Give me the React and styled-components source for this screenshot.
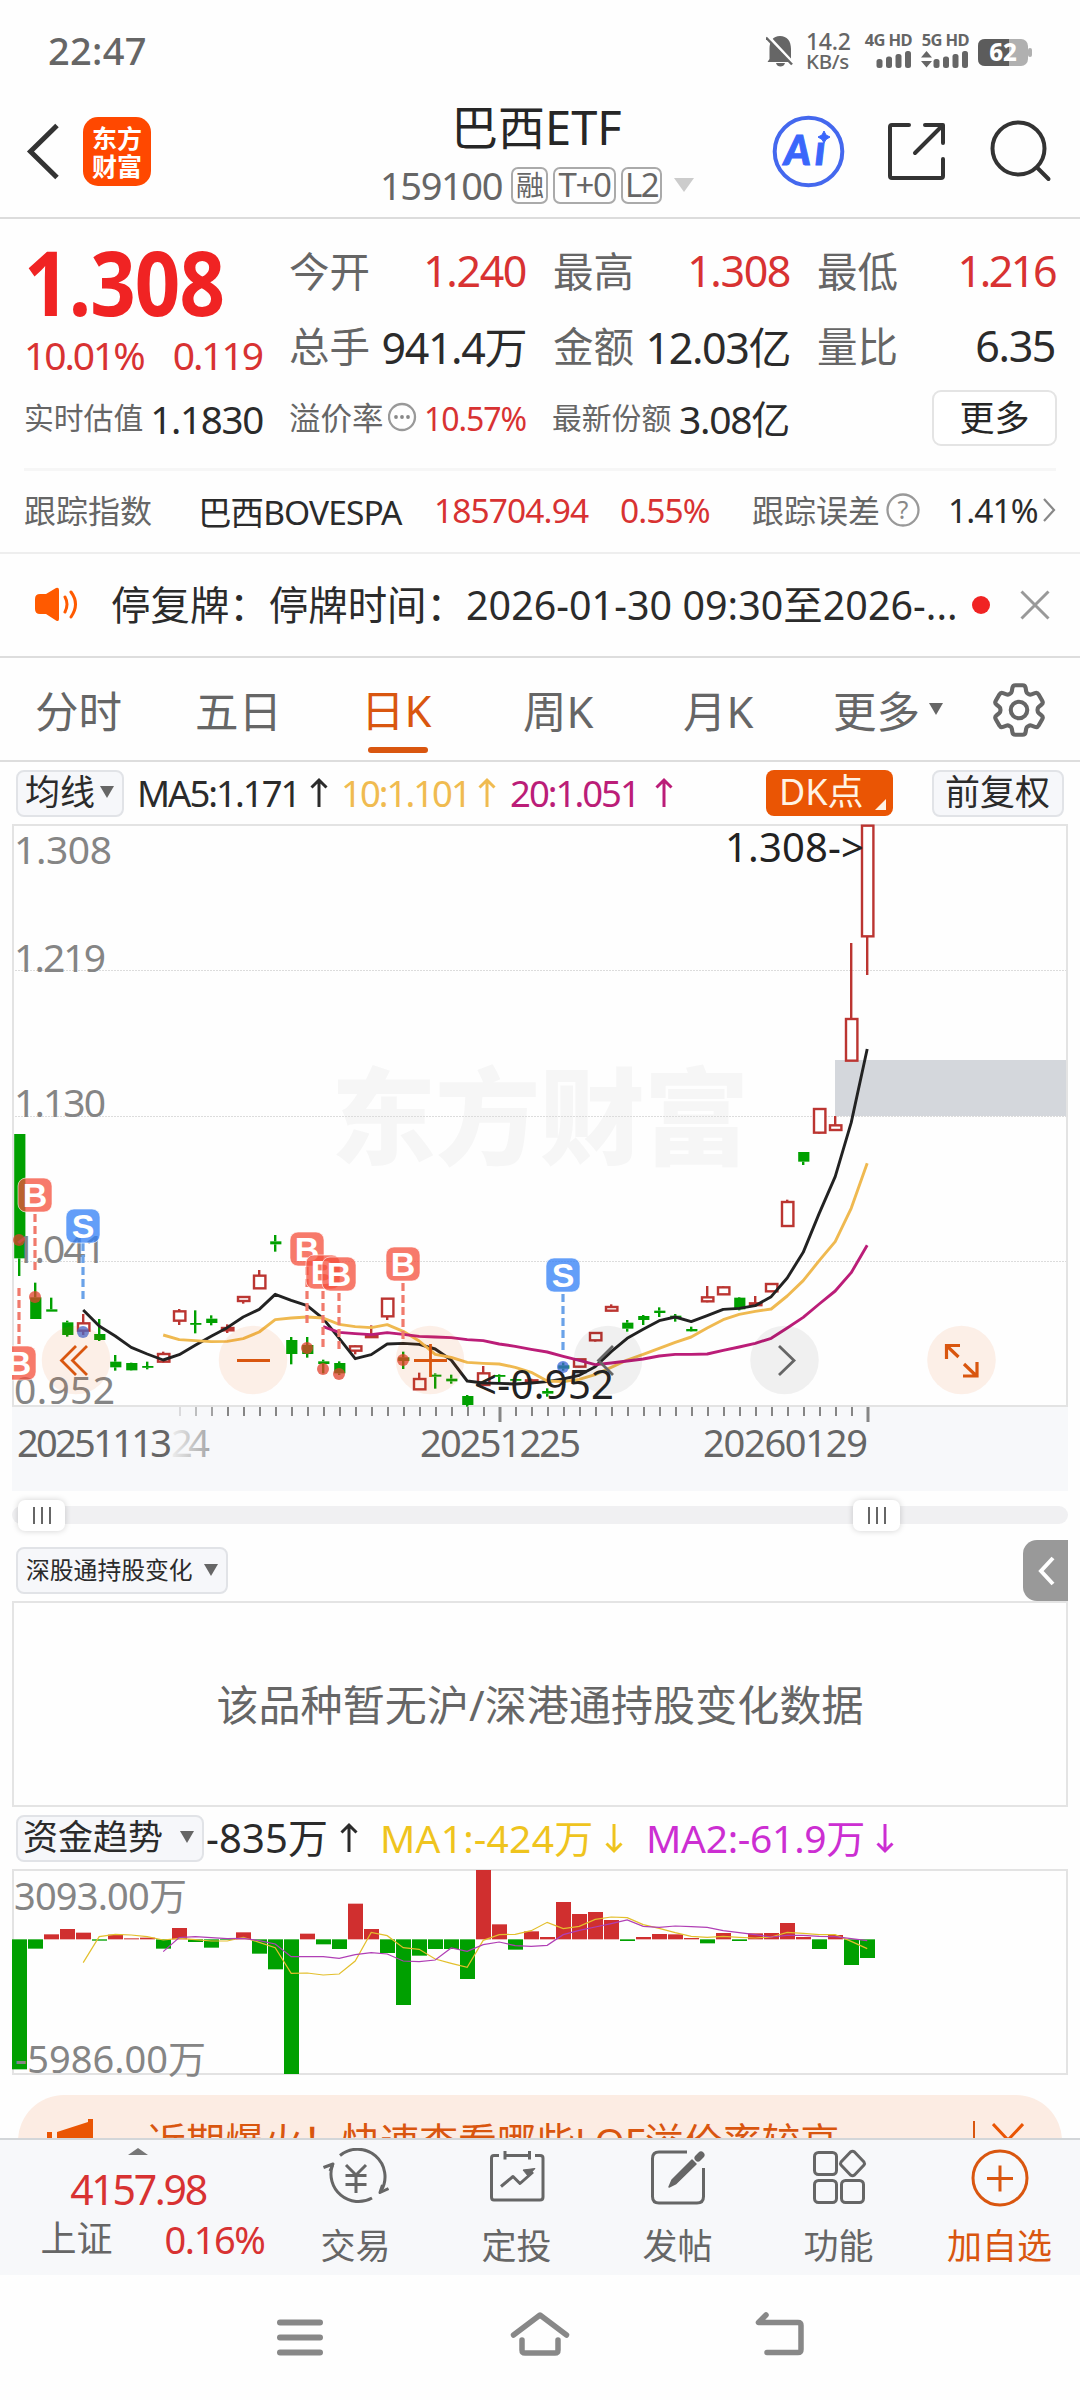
import styled, { createGlobalStyle, css } from 'styled-components';
import { HiOutlineCog6Tooth } from 'react-icons/hi2';

const GlobalStyle = createGlobalStyle`
  * {
    box-sizing: border-box;
  }

  body {
    margin: 0;
    background: #fff;
    font-family: "Noto Sans", "Noto Sans CJK SC", sans-serif;
    color: #2b2b2b;
  }

  svg {
    display: block;
    flex: none;
  }
`;

const Screen = styled.div`
  width: 1080px;
  height: 2400px;
  overflow: hidden;
  display: flex;
  flex-direction: column;
  background: #fefefe;
  white-space: nowrap;
`;

/* status bar */

const StatusBar = styled.div`
  height: 100px;
  display: flex;
  justify-content: space-between;
  padding: 0 48px 0 48px;
  color: #666;
`;

const Clock = styled.div`
  font-size: 38px;
  line-height: 100px;
  letter-spacing: 0.3px;
  font-weight: 500;
`;

const StatusIcons = styled.div`
  display: flex;
  padding-top: 31px;
`;

const Speed = styled.div`
  width: 45px;
  margin: 0 12px 0 12px;
  font-size: 23px;
  font-weight: 500;
  line-height: 20px;
  letter-spacing: -0.3px;

  span {
    display: block;
    font-size: 20.5px;
  }
`;

const Signal = styled.div`
  width: 49px;
  margin-right: 8px;
  display: flex;
  flex-direction: column;
  align-items: flex-end;
  gap: 2px;
  font-size: 16.5px;
  font-weight: 700;
  line-height: 18px;
  letter-spacing: -0.6px;
`;

/* title bar */

const TitleBar = styled.header`
  height: 119px;
  border-bottom: 2px solid #dcdcdc;
  display: flex;
  align-items: flex-start;
`;

const BackIcon = styled.svg`
  margin: 22px 22px 0 26px;
`;

const BrandLogo = styled.div`
  width: 68px;
  height: 69px;
  margin-top: 17px;
  border-radius: 15px;
  background: #ff4800;
  color: #fff;
  display: flex;
  flex-direction: column;
  align-items: center;
  justify-content: center;
  font-size: 25px;
  line-height: 28px;
  font-weight: 700;
`;

const TitleBlock = styled.div`
  width: 314px;
  margin-left: 229px;
`;

const FundName = styled.h1`
  margin: -3px 0 0;
  padding-left: 71px;
  font-size: 47px;
  font-weight: 400;
  line-height: 61px;
  letter-spacing: 0;
  color: #262626;
`;

const CodeLine = styled.div`
  height: 54px;
  display: flex;
  align-items: center;
  font-size: 38px;
  letter-spacing: -1.4px;
  color: #666;
`;

const CodeTag = styled.span`
  width: ${(props) => props.$width}px;
  height: 37px;
  margin-left: ${(props) => props.$gap || 5}px;
  border: 2px solid #aaa;
  border-radius: 7px;
  font-size: ${(props) => props.$size || 33}px;
  line-height: 32px;
  text-align: center;
`;

const HeaderActions = styled.div`
  margin: 13px 0 0 78px;
`;

const TriangleDown = styled.i`
  width: 0;
  height: 0;
  flex: none;
  border-style: solid;
  border-width: ${(props) => props.$height || 12}px ${(props) => (props.$width || 15) / 2}px 0;
  border-color: ${(props) => props.$color || '#666'} transparent transparent;
  margin-left: ${(props) => props.$gap || 0}px;
`;

/* quote */

const Quote = styled.section`
  display: flex;
  height: 164px;
  padding: 14px 25px 0 24px;
`;

const PriceBlock = styled.div`
  width: 266px;
`;

const Price = styled.div`
  font-size: 90px;
  line-height: 97px;
  font-weight: 700;
  letter-spacing: -1px;
  transform: scaleX(0.885);
  transform-origin: 0 0;
  color: #f02323;
`;

const Change = styled.div`
  width: 238px;
  display: flex;
  justify-content: space-between;
  font-size: 39px;
  line-height: 50px;
  letter-spacing: -2.1px;
  color: #d83232;
`;

const StatGrid = styled.div`
  display: grid;
  grid-template-columns: 237px 237px 238px;
  grid-auto-rows: 75px;
  column-gap: 27px;
`;

const Stat = styled.div`
  display: flex;
  justify-content: space-between;
  align-items: center;
`;

const StatLabel = styled.span`
  margin-top: -3px;
  font-size: ${(props) => props.$size || 40.5}px;
  color: #666;
`;

const StatValue = styled.span`
  font-size: ${(props) => props.$size || 43}px;
  letter-spacing: ${(props) => props.$track || '-0.033em'};
  margin-top: -1px;
  color: ${(props) => (props.$up ? '#d83232' : '#2b2b2b')};
`;

const EstimateRow = styled.section`
  height: 73px;
  display: grid;
  grid-template-columns: 239px 237px 237px 126px;
  column-gap: 26px;
  padding-left: 24px;
  align-items: center;
  line-height: 50px;
`;

const MoreButton = styled.button`
  width: 125px;
  height: 56px;
  margin: -4px 0 0 117px;
  border: 2px solid #e4e4e4;
  border-radius: 9px;
  background: #fff;
  font: inherit;
  font-size: 35px;
  line-height: 46px;
  color: #262626;
  padding: 0;
`;

const IndexRow = styled.section`
  height: 84px;
  margin: 12px 24px 0;
  padding-bottom: 3px;
  border-top: 3px solid #f6f6f6;
  display: grid;
  grid-template-columns: 174px 236px 186px 132px 133px 63px 94px 20px;
  align-items: center;
  font-size: 32px;
`;

const IndexNumber = styled.span`
  font-size: 33.5px;
  letter-spacing: -0.9px;
  color: ${(props) => (props.$up ? '#d83232' : '#2b2b2b')};
`;

/* notice strip */

const Notice = styled.section`
  height: 106px;
  border-top: 2px solid #eee;
  border-bottom: 2px solid #ddd;
  display: flex;
  align-items: center;
  padding-left: 33px;
`;

const NoticeText = styled.div`
  width: 854px;
  margin-left: 31px;
  padding-bottom: 5px;
  font-size: 39.4px;
  letter-spacing: 0.05px;
`;

const Dot = styled.i`
  width: 18px;
  height: 18px;
  margin: 0 30px 0 7px;
  border-radius: 50%;
  background: #f02323;
`;

/* period tabs */

const Tabs = styled.nav`
  height: 104px;
  border-bottom: 2px solid #ddd;
  display: grid;
  grid-template-columns: 160px 172px 156px 160px 150px 153px 64px;
  padding-left: 35px;
  align-items: center;
`;

const Tab = styled.div`
  height: 104px;
  display: flex;
  align-items: center;
  padding-bottom: 2px;
  font-size: 43.5px;
  color: #666;

  ${(props) =>
    props.$active &&
    css`
      color: #d9560f;
      flex-direction: column;
      align-items: flex-start;
      padding-top: 21px;
      line-height: 62px;
      text-indent: -6px;

      &::after {
        content: '';
        width: 60px;
        height: 6px;
        margin-top: 6px;
        margin-left: 1px;
        border-radius: 3px;
        background: #d9560f;
      }
    `}
`;

/* indicator rows */

const IndicatorRow = styled.div`
  height: ${(props) => props.$height}px;
  display: flex;
  align-items: center;
  padding-left: 16px;
`;

const Chip = styled.div`
  width: ${(props) => props.$width}px;
  height: 47px;
  flex: none;
  display: flex;
  align-items: center;
  padding-left: ${(props) => props.$pad || 7}px;
  padding-bottom: 2px;
  margin-left: ${(props) => props.$gap || 0}px;
  border: 2px solid #e1e3e7;
  border-radius: 8px;
  background: #f6f7fa;
  font-size: ${(props) => props.$size || 35}px;
  line-height: 40px;
`;

const DkChip = styled(Chip)`
  position: relative;
  border: 0;
  height: 46px;
  background: #ea5504;
  color: #fff3e4;

  &::after {
    content: '';
    position: absolute;
    right: 7px;
    bottom: 6px;
    border-style: solid;
    border-width: 0 0 11px 11px;
    border-color: transparent transparent #fff3e4;
  }
`;

const Reading = styled.div`
  width: ${(props) => props.$width}px;
  flex: none;
  margin-left: ${(props) => props.$gap || 0}px;
  display: flex;
  align-items: center;
  justify-content: space-between;
  line-height: 44px;
  padding-bottom: 1px;
  font-size: ${(props) => props.$size || 36.5}px;
  letter-spacing: ${(props) => props.$track || -2}px;
  color: ${(props) => props.$color || '#2b2b2b'};
`;

/* charts */

const ChartSvg = styled.svg`
  font-size: 39px;
`;

const SliderWrap = styled.div`
  height: 49px;
  padding: 15px 12px 0;
`;

const SliderTrack = styled.div`
  height: 18px;
  border-radius: 9px;
  background: #f0f0f2;
  display: flex;
  align-items: center;
  justify-content: space-between;
  padding: 0 168px 0 6px;
`;

const Handle = styled.div`
  width: 47px;
  height: 31px;
  flex: none;
  border-radius: 7px;
  background: #fff;
  box-shadow: 0 0 6px rgba(0, 0, 0, 0.18);
  display: flex;
  align-items: center;
  justify-content: center;
  gap: 6px;

  i {
    width: 2px;
    height: 17px;
    background: #666;
  }
`;

const CollapseTab = styled.div`
  width: 45px;
  height: 61px;
  margin: 0 12px 0 auto;
  border-radius: 14px 0 0 14px;
  background: #999;
  display: flex;
  align-items: center;
  justify-content: center;
`;

const EmptyPanel = styled.section`
  height: 206px;
  margin: 0 12px;
  padding-bottom: 4px;
  border: 2px solid #e4e4e4;
  display: flex;
  align-items: center;
  justify-content: center;
  font-size: 42px;
  letter-spacing: 0.1px;
  color: #666;
`;

/* promo banner, its lower half slides under the tool bar */

const PromoClip = styled.div`
  height: 61px;
  flex: none;
  overflow: hidden;
  padding: 18px 18px 0;
`;

const Promo = styled.div`
  height: 92px;
  padding-left: 28px;
  border-radius: 46px;
  background: #fcece3;
  color: #d9560f;
  display: flex;
  align-items: center;
  font-size: 38.9px;
`;

const PromoText = styled.div`
  width: 815px;
  margin-left: 51px;
  padding-bottom: 4px;
`;

const PromoDivider = styled.i`
  width: 2px;
  height: 40px;
  margin: 0 17px 0 11px;
  background: #d9560f;
`;

const ToolBar = styled.footer`
  height: 137px;
  flex: none;
  border-top: 2px solid #d3d6d9;
  background: #f7f8fa;
  display: flex;
`;

const Market = styled.div`
  width: 275px;
  flex: none;
  display: flex;
  flex-direction: column;
  align-items: center;
  padding-top: 8px;
  color: #d83232;
`;

const TriangleUp = styled.i`
  border-style: solid;
  border-width: 0 10px 7px;
  border-color: transparent transparent #777;
`;

const MarketPrice = styled.div`
  margin-left: 1px;
  padding-top: 2px;
  font-size: 41px;
  line-height: 64px;
  letter-spacing: -2.3px;
`;

const MarketChange = styled.div`
  width: 224px;
  margin-left: 30px;
  display: flex;
  justify-content: space-between;
  font-size: 38px;
  line-height: 36px;
  letter-spacing: -1.4px;

  span {
    font-size: 36px;
    letter-spacing: 0;
    line-height: 36px;
    color: #666;
  }
`;

const Tool = styled.div`
  width: 161px;
  flex: none;
  display: flex;
  flex-direction: column;
  align-items: center;
  padding-top: 8px;
  font-size: 35px;
  line-height: 50px;
  color: ${(props) => (props.$accent ? '#d9560f' : '#666')};

  svg {
    margin-bottom: 11px;
  }
`;

const SystemNav = styled.div`
  height: 125px;
  display: flex;
  justify-content: center;
  gap: 180px;
  padding-top: 34px;
`;

// Chart rows are kept in thirds of a pixel measured from y = 1080.
const py = (v) => 1080 + v / 3;
const px = (i) => 19.2 + i * 16;

// [rising, body top, body bottom, high, low]
const candles = [
  [0, 162, 535, 162, 588], [0, 652, 717, 608, 717], [0, 688, 695, 653, 695],
  [0, 727, 765, 722, 770], [1, 730, 752, 702, 765], [0, 762, 780, 717, 783],
  [0, 845, 862, 825, 872], [0, 849, 871, 848, 872], [0, 858, 863, 845, 868],
  [1, 822, 845, 815, 848], [1, 694, 722, 687, 735], [0, 729, 733, 691, 760],
  [0, 716, 729, 706, 736], [1, 744, 751, 733, 759], [1, 651, 663, 648, 671],
  [1, 587, 625, 570, 627], [0, 484, 493, 465, 515], [0, 780, 822, 771, 853],
  [0, 795, 822, 771, 833], [0, 844, 852, 839, 880], [0, 849, 880, 844, 885],
  [1, 799, 812, 796, 823], [1, 766, 771, 736, 773], [1, 656, 709, 656, 720],
  [0, 832, 843, 815, 867], [1, 897, 928, 878, 930], [0, 884, 890, 880, 926],
  [0, 896, 904, 884, 911], [0, 948, 975, 945, 980], [1, 880, 915, 858, 918],
  [0, 885, 890, 883, 910], [0, 897, 902, 888, 906], [1, 901, 906, 896, 912],
  [0, 933, 941, 925, 950], [0, 856, 866, 848, 872], [1, 838, 860, 838, 862],
  [1, 759, 781, 757, 785], [1, 681, 692, 673, 694], [0, 728, 746, 720, 755],
  [0, 708, 720, 705, 735], [0, 692, 699, 682, 711], [0, 707, 714, 702, 725],
  [0, 747, 754, 740, 755], [1, 652, 664, 618, 667], [1, 622, 643, 619, 645],
  [0, 653, 688, 651, 691], [1, 670, 675, 648, 677], [1, 612, 634, 611, 636],
  [1, 366, 438, 359, 441], [0, 216, 245, 216, 255], [1, 87, 158, 87, 161],
  [1, 136, 150, 108, 150], [1, -183, -58, -411, -58], [1, -763, -431, -763, -315],
];

const ma5 = [690, 738, 768, 802, 822, 840, 824, 796, 769, 743, 711, 688, 643, 661, 677, 716, 775, 836, 824, 792, 790, 793, 807, 840, 903, 909, 910, 912, 909, 905, 897, 886, 860, 815, 775, 748, 722, 711, 725, 707, 688, 685, 677, 650, 594, 517, 400, 290, 128, -93];
const ma10 = [765, 779, 782, 785, 784, 776, 756, 719, 714, 711, 714, 733, 740, 743, 734, 754, 783, 823, 832, 847, 850, 852, 862, 877, 903, 905, 898, 884, 862, 840, 823, 805, 787, 771, 744, 719, 703, 694, 687, 648, 602, 542, 485, 385, 250];
const ma20 = [740, 757, 761, 764, 758, 763, 769, 771, 773, 779, 782, 792, 799, 808, 816, 829, 841, 854, 849, 843, 837, 828, 823, 823, 822, 811, 801, 790, 775, 744, 712, 672, 633, 578, 496];

// letter, centre x, centre y, dash start, dash end, dot y
const signals = [
  ['B', 19, 1363, 1288, 1346, 1240],
  ['B', 35, 1195, 1214, 1271, 1297],
  ['S', 83, 1226, 1243, 1302, 1332],
  ['B', 307, 1249, 1267, 1325, 1348],
  ['B', 323, 1272, 1291, 1348, 1369],
  ['B', 339, 1274, 1293, 1350, 1374],
  ['B', 403, 1264, 1283, 1340, 1360],
  ['S', 563, 1275, 1294, 1351, 1367],
];

const flows = [808, 446, 403, 387, 398, 422, 404, 415, 413, 446, 384, 426, 443, 420, 397, 461, 508, 822, 401, 433, 447, 311, 387, 459, 615, 467, 447, 447, 537, 210, 373, 449, 394, 411, 306, 342, 336, 360, 423, 411, 402, 403, 414, 430, 399, 423, 400, 399, 369, 411, 447, 405, 495, 474];
const flowMa1 = [488, 410, 403, 405, 410, 420, 415, 419, 423, 423, 412, 427, 443, 520, 519, 525, 522, 483, 397, 407, 443, 448, 477, 490, 502, 421, 404, 403, 392, 367, 386, 379, 358, 351, 353, 374, 385, 398, 409, 412, 409, 412, 414, 411, 397, 400, 404, 404, 424, 446];
const flowMa2 = [455, 413, 410, 413, 416, 415, 422, 432, 470, 470, 470, 475, 464, 458, 462, 483, 485, 480, 444, 454, 434, 426, 437, 439, 436, 404, 391, 381, 371, 360, 379, 382, 378, 380, 382, 392, 398, 404, 411, 406, 406, 409, 410, 416, 422];

const toPoints = (values, start, y) => values.map((v, i) => `${px(i + start)},${y(v)}`).join(' ');

const Candle = ({ index, data }) => {
  const [up, top, bottom, high, low] = data;
  const x = px(index);
  const color = up ? '#bb3531' : '#00a000';
  const height = Math.max((bottom - top) / 3, 1.8);
  return (
    <g stroke={color} strokeWidth="2.4">
      {high < top && <line x1={x} x2={x} y1={py(high)} y2={py(top)} />}
      {low > bottom && <line x1={x} x2={x} y1={py(bottom)} y2={py(low)} />}
      {up ? (
        <rect x={x - 5.2} y={py(top)} width="11.4" height={height} fill="#fff" />
      ) : (
        <rect x={x - 5} y={py(top)} width="11.2" height={height} fill={color} stroke="none" />
      )}
    </g>
  );
};

const SignalMark = ({ data }) => {
  const [letter, x, y, from, to, dot] = data;
  const buy = letter === 'B';
  return (
    <g>
      <circle cx={x} cy={dot} r="6" fill={buy ? '#e0402c' : '#3b66d8'} opacity="0.75" />
      <line x1={x} x2={x} y1={from} y2={to} stroke={buy ? '#f07a6c' : '#6aa2e8'} strokeWidth="3.2" strokeDasharray="8 4" />
      <rect
        x={x - 17}
        y={y - 17}
        width="34"
        height="34"
        rx="8"
        fill={buy ? '#f4503d' : '#327ff6'}
        fillOpacity="0.76"
        stroke="#fff"
        strokeOpacity="0.6"
      />
      <text x={x} y={y + 12} textAnchor="middle" fontFamily="Liberation Sans" fontWeight="700" fontSize="34" fill="#fff">
        {letter}
      </text>
    </g>
  );
};

const KLineChart = () => (
  <ChartSvg width="1080" height="667" viewBox="0 824 1080 667">
    <defs>
      <clipPath id="plot">
        <rect x="12" y="824" width="1056" height="583" />
      </clipPath>
      <linearGradient id="dateFade" x1="0" x2="1">
        <stop offset="0" stopColor="#eee" />
        <stop offset="1" stopColor="#a6a6a6" />
      </linearGradient>
    </defs>
    <rect x="12" y="1406" width="1056" height="85" fill="#f7f8fa" />
    <text x="331" y="1156" fontSize="105" fontWeight="900" fill="#f6f6f6" textLength="418">东方财富</text>
    <g stroke="#dcdcdc" strokeDasharray="2 1">
      <line x1="12" x2="1068" y1="970.5" y2="970.5" />
      <line x1="12" x2="1068" y1="1116.5" y2="1116.5" />
      <line x1="12" x2="1068" y1="1261.5" y2="1261.5" />
    </g>
    <rect x="835" y="1060" width="232" height="56" fill="#d4d7dc" />
    <path d="M13 1406V825H1067V1406Z" fill="none" stroke="#e3e3e3" strokeWidth="2" />

    {candles.map((data, i) => <Candle key={i} index={i} data={data} />)}
    <g fill="none" strokeWidth="2.9" strokeLinejoin="round">
      <polyline points={toPoints(ma5, 4, py)} stroke="#222" />
      <polyline points={toPoints(ma10, 9, py)} stroke="#efb950" />
      <polyline points={toPoints(ma20, 19, py)} stroke="#bb1d78" />
    </g>

    <g fill="#858585">
      <text x="14" y="864" textLength="98">1.308</text>
      <text x="14" y="972" textLength="92">1.219</text>
      <text x="14" y="1117" textLength="92">1.130</text>
      <text x="14" y="1263" textLength="92">1.041</text>
      <text x="14" y="1404" textLength="101">0.952</text>
    </g>
    <g clipPath="url(#plot)">
      {signals.map((data, i) => <SignalMark key={i} data={data} />)}
    </g>

    <g fill="#ea5504" fillOpacity="0.09">
      <circle cx="76" cy="1360" r="34.3" />
      <circle cx="253" cy="1360" r="34.3" />
      <circle cx="430" cy="1360" r="34.3" />
      <circle cx="961.5" cy="1360" r="34.3" />
    </g>
    <g fill="#000" fillOpacity="0.055">
      <circle cx="608" cy="1360" r="34.3" />
      <circle cx="784.5" cy="1360" r="34.3" />
    </g>
    <g fill="none" stroke="#d9560f" strokeWidth="2.8">
      <path d="M76 1346L61.500 1360.500L76 1375M87 1346L72.500 1360.500L87 1375" />
      <path d="M237 1360.500H270M414 1360.500H447M430.500 1344V1377" />
      <path d="M960 1345.500H946.500V1359M946.500 1345.500L958.500 1357M964 1364L976.500 1376M963 1376H977V1362" strokeWidth="3.2" />
    </g>
    <path d="M613 1346L598.500 1360.500L613 1375M779 1346L794 1360.500L779 1375" fill="none" stroke="#666" strokeWidth="2.8" />

    <g fill="#222" fontSize="40">
      <text x="725" y="862" textLength="139">1.308-&gt;</text>
      <text x="474" y="1399" textLength="140">&lt;-0.952</text>
    </g>

    <g stroke="#858585" strokeWidth="2">
      {candles.slice(10).map((_, i) => (
        <line key={i} x1={px(i + 10) + 0.8} x2={px(i + 10) + 0.8} y1="1407" y2="1416" opacity={Math.min(1, 0.25 + i * 0.25)} />
      ))}
      <path d="M500 1407V1422M868 1407V1422" strokeWidth="3" />
    </g>
    <g fill="#666" fontSize="38">
      <text x="17" y="1457" textLength="155">20251113</text>
      <text x="171" y="1457" textLength="39" fill="url(#dateFade)">24</text>
      <text x="420" y="1457" textLength="161">20251225</text>
      <text x="703" y="1457" textLength="165">20260129</text>
    </g>
  </ChartSvg>
);

const FlowChart = () => {
  const y = (v) => 1800 + v / 3;
  return (
    <ChartSvg width="1080" height="208" viewBox="0 1869 1080 208">
      <path d="M13 2074V1870H1067V2074Z" fill="none" stroke="#e3e3e3" strokeWidth="2" />
      {flows.map((v, i) => (
        <rect
          key={i}
          x={12 + i * 16}
          y={Math.min(y(v), y(418))}
          width="15"
          height={Math.abs(v - 418) / 3}
          fill={v < 418 ? '#d02f2f' : '#00a000'}
        />
      ))}
      <polyline points={toPoints(flowMa1, 4, y)} fill="none" stroke="#e3bf2c" strokeWidth="1.2" />
      <polyline points={toPoints(flowMa2, 9, y)} fill="none" stroke="#b03fb5" strokeWidth="1.2" />
      <g fill="#858585" fontSize="38">
        <text x="14" y="1910" textLength="173">3093.00万</text>
        <text x="15" y="2073" textLength="191">-5986.00万</text>
      </g>
    </ChartSvg>
  );
};

const Arrow = ({ down }) => (
  <svg width="18" height="32" viewBox="0 0 18 32" fill="none" stroke="currentColor" strokeWidth="3">
    {down ? <path d="M9 2V29M1.500 21.500L9 29L16.500 21.500" /> : <path d="M9 30V3M1.500 10.500L9 3L16.500 10.500" />}
  </svg>
);

const Bars = ({ updown }) => (
  <svg width={updown ? 48 : 36} height="17" viewBox={updown ? '-12 0 48 17' : '0 0 36 17'} fill="#666">
    {updown && <path d="M-12 6.500L-6.500 0L-1 6.500ZM-12 10L-6.500 16.500L-1 10Z" />}
    <rect x="0.500" y="8" width="6" height="9" rx="2.500" />
    <rect x="10" y="5.500" width="6" height="11.500" rx="2.500" />
    <rect x="19.500" y="3" width="6" height="14" rx="2.500" />
    <rect x="29" y="0" width="6" height="17" rx="2.500" />
  </svg>
);

// Tool bar icons share a 66 x 62 box and 3px strokes.
const ToolIcon = ({ children }) => (
  <svg width="66" height="62" viewBox="0 0 66 62" fill="none" stroke="currentColor" strokeWidth="3" strokeLinejoin="round">
    {children}
  </svg>
);

const App = () => {
  return (
    <>
      <GlobalStyle />
      <Screen>
        <StatusBar>
          <Clock>22:47</Clock>
          <StatusIcons>
            <svg width="28" height="40" viewBox="0 0 28 40">
              <path d="M3.500 28V18C3.500 10 7 5 14 5S25 10 25 18V28L26 31H1.500ZM10 32H19C18.500 34.500 16.500 35.500 14.500 35.500S10.500 34.500 10 32Z" fill="#666" />
              <path d="M1.500 4.500L28 33" stroke="#fff" strokeWidth="3" />
              <path d="M0 6.500L26 33.500" stroke="#666" strokeWidth="2.500" />
            </svg>
            <Speed>14.2<span>KB/s</span></Speed>
            <Signal>4G HD<Bars /></Signal>
            <Signal>5G HD<Bars updown /></Signal>
            <svg width="55" height="40" viewBox="0 0 55 40">
              <rect x="1" y="8" width="50" height="27" rx="7" fill="#b0b0b0" />
              <rect x="51" y="17" width="4" height="9" rx="2" fill="#b0b0b0" />
              <path d="M8 8H32V35H8Q1 35 1 28V15Q1 8 8 8Z" fill="#5c5c5c" />
              <text x="26" y="30" textAnchor="middle" fontSize="24" fontWeight="800" fill="#fff">62</text>
            </svg>
          </StatusIcons>
        </StatusBar>

        <TitleBar>
          <BackIcon width="35" height="60" viewBox="0 0 35 60" fill="none" stroke="#333" strokeWidth="5">
            <path d="M31 3.500L4.500 29.500L31 55.500" />
          </BackIcon>
          <BrandLogo><span>东方</span><span>财富</span></BrandLogo>
          <TitleBlock>
            <FundName>巴西ETF</FundName>
            <CodeLine>
              159100
              <CodeTag $width={37} $gap={9} $size={28}>融</CodeTag>
              <CodeTag $width={64}>T+0</CodeTag>
              <CodeTag $width={41}>L2</CodeTag>
              <TriangleDown $width={21} $height={14} $color="#ccc" $gap={12} />
            </CodeLine>
          </TitleBlock>
          <HeaderActions>
            <svg width="280" height="76" viewBox="772 113 280 76" fill="none">
              <circle cx="808.500" cy="151.500" r="33.800" stroke="#4468ee" strokeWidth="4" />
              <g fill="#3a66fb" stroke="#3a66fb" fontFamily="Lato" fontWeight="900" fontStyle="italic" fontSize="41">
                <text x="784" y="164.500">A</text>
                <text x="815" y="164.500">ı</text>
                <path d="M824 131L826 135L830 137L826 139.500L824 143L822 139.500L818 137L822 135Z" />
              </g>
              <g stroke="#333" strokeWidth="4" strokeLinecap="round" strokeLinejoin="round">
                <path d="M909 125H892Q890 125 890 127V176Q890 178 892 178H941Q943 178 943 176V159" />
                <path d="M925 125H943V143M942 126L915 153" />
                <circle cx="1018.500" cy="148.500" r="26" />
                <path d="M1037 167.500L1048.500 179" />
              </g>
            </svg>
          </HeaderActions>
        </TitleBar>

        <Quote>
          <PriceBlock>
            <Price>1.308</Price>
            <Change><span>10.01%</span><span>0.119</span></Change>
          </PriceBlock>
          <StatGrid>
            <Stat><StatLabel>今开</StatLabel><StatValue $up>1.240</StatValue></Stat>
            <Stat><StatLabel>最高</StatLabel><StatValue $up>1.308</StatValue></Stat>
            <Stat><StatLabel>最低</StatLabel><StatValue $up $track="-2.5px">1.216</StatValue></Stat>
            <Stat><StatLabel>总手</StatLabel><StatValue>941.4万</StatValue></Stat>
            <Stat><StatLabel>金额</StatLabel><StatValue>12.03亿</StatValue></Stat>
            <Stat><StatLabel>量比</StatLabel><StatValue>6.35</StatValue></Stat>
          </StatGrid>
        </Quote>
        <EstimateRow>
          <Stat><StatLabel $size={29.8}>实时估值</StatLabel><StatValue $size={38.5}>1.1830</StatValue></Stat>
          <Stat>
            <StatLabel $size={31.5}>溢价率</StatLabel>
            <svg width="32" height="38" viewBox="0 0 32 38">
              <circle cx="14" cy="16" r="13" fill="none" stroke="#999" strokeWidth="2.300" />
              <g fill="#888">
                <circle cx="8" cy="16" r="1.900" />
                <circle cx="14" cy="16" r="1.900" />
                <circle cx="20" cy="16" r="1.900" />
              </g>
            </svg>
            <StatValue $size={32} $up>10.57%</StatValue>
          </Stat>
          <Stat><StatLabel $size={29.8}>最新份额</StatLabel><StatValue $size={39}>3.08亿</StatValue></Stat>
          <MoreButton>更多</MoreButton>
        </EstimateRow>

        <IndexRow>
          <StatLabel $size={32}>跟踪指数</StatLabel>
          <IndexNumber>巴西BOVESPA</IndexNumber>
          <IndexNumber $up>185704.94</IndexNumber>
          <IndexNumber $up>0.55%</IndexNumber>
          <StatLabel $size={32}>跟踪误差</StatLabel>
          <svg width="36" height="36" viewBox="0 0 36 36">
            <circle cx="18" cy="18" r="15.500" fill="none" stroke="#999" strokeWidth="2.300" />
            <text x="18" y="26.500" textAnchor="middle" fontSize="25" fill="#888">?</text>
          </svg>
          <IndexNumber>1.41%</IndexNumber>
          <svg width="14" height="26" viewBox="0 0 14 26" fill="none" stroke="#888" strokeWidth="2.200">
            <path d="M2 2L12 13L2 24" />
          </svg>
        </IndexRow>

        <Notice>
          <svg width="47" height="40" viewBox="33 585 47 40" fill="none" stroke="#ff5a00" strokeWidth="3" strokeLinecap="round">
            <path d="M40 594H46L56 588Q59 587 59 590V619Q59 622 56 620.500L46 614H40Q35 614 35 609V599Q35 594 40 594Z" fill="#ff5a00" stroke="none" />
            <path d="M65 597Q69 604 65 612M71 592Q80 604 71 617" />
          </svg>
          <NoticeText>停复牌：停牌时间：2026-01-30 09:30至2026-...</NoticeText>
          <Dot />
          <svg width="30" height="30" viewBox="0 0 30 30" stroke="#999" strokeWidth="3">
            <path d="M1.500 1.500L28.500 28.500M28.500 1.500L1.500 28.500" />
          </svg>
        </Notice>

        <Tabs>
          <Tab>分时</Tab>
          <Tab>五日</Tab>
          <Tab $active>日K</Tab>
          <Tab>周K</Tab>
          <Tab>月K</Tab>
          <Tab>更多<TriangleDown $gap={9} /></Tab>
          <HiOutlineCog6Tooth size={66} color="#666" />
        </Tabs>

        <IndicatorRow $height={62}>
          <Chip $width={108}>均线<TriangleDown $gap={5} /></Chip>
          <Reading $width={191} $gap={13}>MA5:1.171<Arrow /></Reading>
          <Reading $width={155} $gap={13} $color="#f0bb50">10:1.101<Arrow /></Reading>
          <Reading $width={163} $gap={14} $color="#bb1d78">20:1.051<Arrow /></Reading>
          <DkChip $width={127} $pad={13} $gap={93} $size={36}>DK点</DkChip>
          <Chip $width={132} $pad={11} $gap={39}>前复权</Chip>
        </IndicatorRow>

        <KLineChart />

        <SliderWrap>
          <SliderTrack>
            <Handle><i /><i /><i /></Handle>
            <Handle><i /><i /><i /></Handle>
          </SliderTrack>
        </SliderWrap>

        <IndicatorRow $height={61}>
          <Chip $width={212} $pad={8} $size={23.8}>深股通持股变化<TriangleDown $gap={11} /></Chip>
          <CollapseTab>
            <svg width="18" height="30" viewBox="0 0 18 30" fill="none" stroke="#fff" strokeWidth="4">
              <path d="M16 2L4 15L16 28" />
            </svg>
          </CollapseTab>
        </IndicatorRow>
        <EmptyPanel>该品种暂无沪/深港通持股变化数据</EmptyPanel>

        <IndicatorRow $height={62}>
          <Chip $width={188} $pad={5}>资金趋势<TriangleDown $gap={17} /></Chip>
          <Reading $width={152} $gap={2} $size={40} $track={0.1}>-835万<Arrow /></Reading>
          <Reading $width={243} $gap={22} $size={39} $track={0.2} $color="#efc41e">MA1:-424万<Arrow down /></Reading>
          <Reading $width={248} $gap={23} $size={39} $track={-0.3} $color="#cc2ed2">MA2:-61.9万<Arrow down /></Reading>
        </IndicatorRow>
        <FlowChart />

        <PromoClip>
          <Promo>
            <svg width="50" height="46" viewBox="0 0 50 46" fill="#ea5504">
              <path d="M1 14H6V34H1ZM11 14L42 4V1H47V46H42V42L11 32Z" />
            </svg>
            <PromoText>近期爆火！快速查看哪些LOF溢价率较高</PromoText>
            <PromoDivider />
            <svg width="32" height="36" viewBox="0 0 32 36" stroke="#ea5504" strokeWidth="3">
              <path d="M1 1L16 17L31 1M1 33L16 17L31 33" fill="none" />
            </svg>
          </Promo>
        </PromoClip>

        <ToolBar>
          <Market>
            <TriangleUp />
            <MarketPrice>4157.98</MarketPrice>
            <MarketChange><span>上证</span>0.16%</MarketChange>
          </Market>
          <Tool>
            <ToolIcon>
              <path d="M17 7.500A27.500 27.500 0 0 1 58 43M49 50A27.500 27.500 0 0 1 9.500 17" />
              <path d="M0.500 19.500L10 16L7 23M65.500 40.500L57 44.500L59.500 37" />
              <path d="M23 17L33 27L43 17M22.500 27.500H43.500M22.500 36.500H43.500M33 27V45" />
            </ToolIcon>
            交易
          </Tool>
          <Tool>
            <ToolIcon>
              <path d="M15 7.500H10Q7.500 7.500 7.500 10V49Q7.500 52 10 52H56Q59 52 59 49V10Q59 7.500 56 7.500H51M21 3V11.500M45.500 3V11.500M21 7.500H45.500" />
              <path d="M17 38.500L29 28.500L36 35.500L49 24" />
              <path d="M39 22L51 20.500L44 28Z" fill="currentColor" strokeWidth="1" />
            </ToolIcon>
            定投
          </Tool>
          <Tool>
            <ToolIcon>
              <path d="M42 4H14Q7.500 4 7.500 10.500V48.500Q7.500 55 14 55H52Q58.500 55 58.500 48.500V20" />
              <path d="M24 39L27 32L47 12L51 16L31 35.500Z" fill="currentColor" strokeWidth="1.500" />
              <path d="M53 10L56 7" strokeWidth="7" strokeLinecap="round" />
            </ToolIcon>
            发帖
          </Tool>
          <Tool>
            <ToolIcon>
              <rect x="8.500" y="4.500" width="22" height="22" rx="4" />
              <rect x="8.500" y="32.500" width="22" height="22" rx="4" />
              <rect x="35.500" y="32.500" width="22" height="22" rx="4" />
              <path d="M44.500 4L35 14Q34 15.500 35 17L44.500 27Q46.500 28.500 48.500 27L58 17Q59 15.500 58 14L48.500 4Q46.500 2.500 44.500 4Z" />
            </ToolIcon>
            功能
          </Tool>
          <Tool $accent>
            <ToolIcon>
              <circle cx="33" cy="30" r="27" />
              <path d="M20 30.500H46M33 17.500V43.500" />
            </ToolIcon>
            加自选
          </Tool>
        </ToolBar>

        <SystemNav>
          <svg width="60" height="60" viewBox="0 0 60 60" stroke="#888" strokeWidth="6" strokeLinecap="round">
            <path d="M10 13.500H50M10 28.500H50M10 43.500H50" />
          </svg>
          <svg width="60" height="60" viewBox="0 0 60 60" fill="none" stroke="#888" strokeWidth="5.500" strokeLinejoin="round" strokeLinecap="round">
            <path d="M3.500 26L30 6L56.500 26M12 31V41Q12 44 15 44H45Q48 44 48 41V31" />
          </svg>
          <svg width="60" height="60" viewBox="0 0 60 60" fill="none" stroke="#888" strokeWidth="5.500" strokeLinejoin="round" strokeLinecap="round">
            <path d="M16 6L8.500 13.500H48Q51 13.500 51 16.500V40.500Q51 43.500 48 43.500H17" />
          </svg>
        </SystemNav>
      </Screen>
    </>
  );
};

export default App;
